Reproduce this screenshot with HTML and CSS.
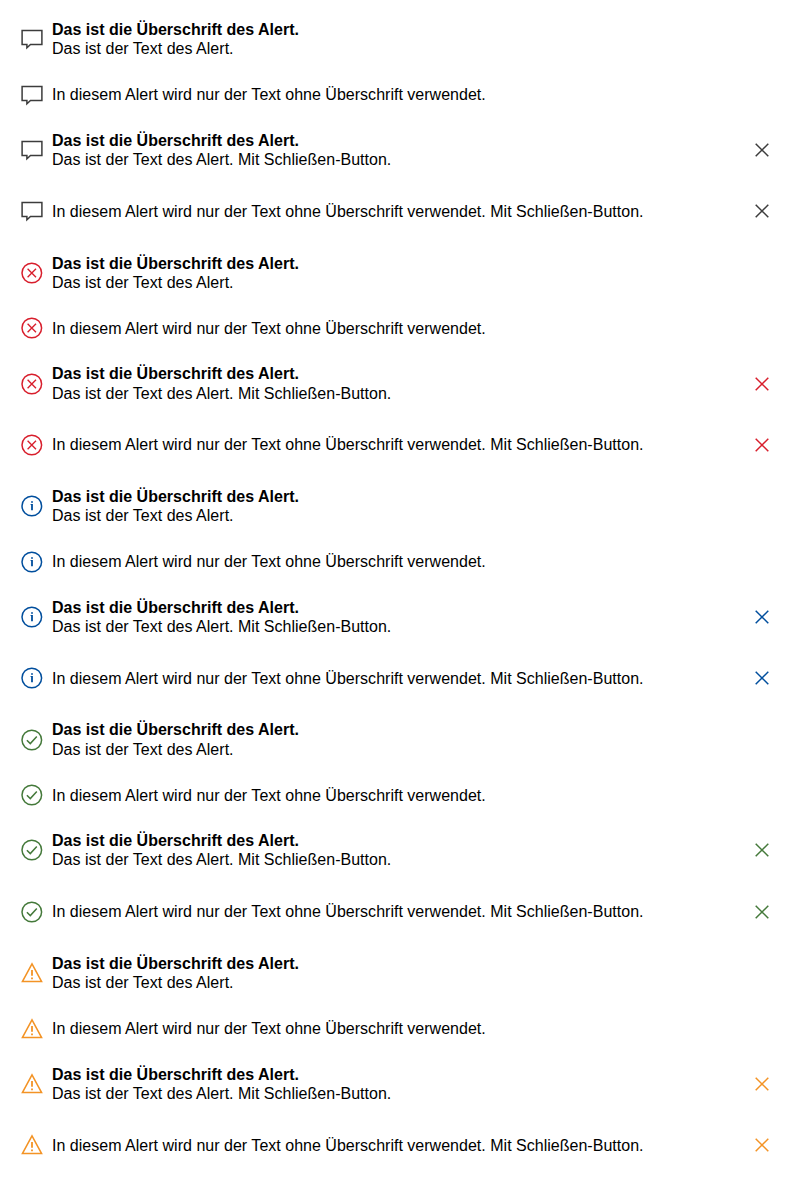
FILE: index.html
```html
<!DOCTYPE html>
<html lang="de">
<head>
<meta charset="utf-8">
<title>Alert</title>
<link rel="stylesheet" href="styles.css">
</head>
<body>
<svg class="sprite" aria-hidden="true">
  <symbol id="bubble" viewBox="0 0 24 24"><path d="M2.100 3.400h19.800v14H10.500L6.900 20.700V17.400H2.100z"/></symbol>
  <symbol id="error" viewBox="0 0 24 24"><circle cx="11.800" cy="12" r="9.800"/><path d="M7.600 7.800l8.400 8.400M16 7.800l-8.400 8.400" stroke-width="1.350"/></symbol>
  <symbol id="info" viewBox="0 0 24 24"><circle cx="11.800" cy="12" r="9.800"/><path d="M12 10v6.300M12 7.200v1.600" stroke-width="1.800"/><path d="M10.600 10.500h1.400" stroke-width="1"/></symbol>
  <symbol id="success" viewBox="0 0 24 24"><circle cx="11.800" cy="12" r="9.800"/><path d="M6.900 12.300l3.400 3.300 6.500-7.100"/></symbol>
  <symbol id="warning" viewBox="0 0 24 24"><path d="M12 2.800L21.600 20.600H2.400z"/><path d="M12 9v5.800M12 16.400v1.800" stroke-width="1.800"/></symbol>
  <symbol id="close" viewBox="0 0 24 24"><path d="M5.700 5.700l12.600 12.600M18.300 5.700L5.700 18.300"/></symbol>
</svg>
<main class="alerts" id="alerts"></main>
<script src="alerts.js"></script>
</body>
</html>
```
FILE: styles.css
```css
body { margin: 0; background: #fff; color: #000; font: 16px/19.2px "Liberation Sans", Arial, sans-serif; }
.sprite { position: absolute; width: 0; height: 0; }
.alerts { padding: 19.41px 20px 0; }
.alert { display: flex; align-items: center; gap: 8px; height: 40px; margin-bottom: 15.6px; }
.alert--plain { margin-bottom: 15.2px; }
.alert--close { margin-bottom: 21.4px; }
.alert--last { margin-bottom: 21.25px; }
.icon { width: 24px; height: 24px; margin-top: -0.2px; flex: none; fill: none; stroke: currentColor; stroke-width: 1.5; }
.body { flex: 1; color: #000; }
.title { font-weight: bold; letter-spacing: 0.01px; }
.text { letter-spacing: 0.016px; }
.text, .title { margin: 0; }
.close { display: flex; padding: 0; border: 0; background: none; color: inherit; margin-right: 6px; }
.bubble { color: #3c3c3c; }
.error { color: #d81e2c; }
.info { color: #004e9d; }
.success { color: #44793a; }
.warning { color: #f39325; }
```
FILE: alerts.js
```js
const root = document.getElementById("alerts");
const icon = name => `<svg class="icon"><use href="#${name}"/></svg>`;
for (const type of ["bubble", "error", "info", "success", "warning"]) {
  [["", true, false], ["alert--plain", false, false], ["alert--close", true, true], ["alert--last", false, true]].forEach(([mod, title, close]) => {
    const text = (title ? "Das ist der Text des Alert." : "In diesem Alert wird nur der Text ohne Überschrift verwendet.") + (close ? " Mit Schließen-Button." : "");
    root.insertAdjacentHTML("beforeend", `<div class="alert ${mod} ${type}">${icon(type)}<div class="body">${title ? '<p class="title">Das ist die Überschrift des Alert.</p>' : ""}<p class="text">${text}</p></div>${close ? `<button class="close" aria-label="Schließen">${icon("close")}</button>` : ""}</div>`);
  });
}
```
